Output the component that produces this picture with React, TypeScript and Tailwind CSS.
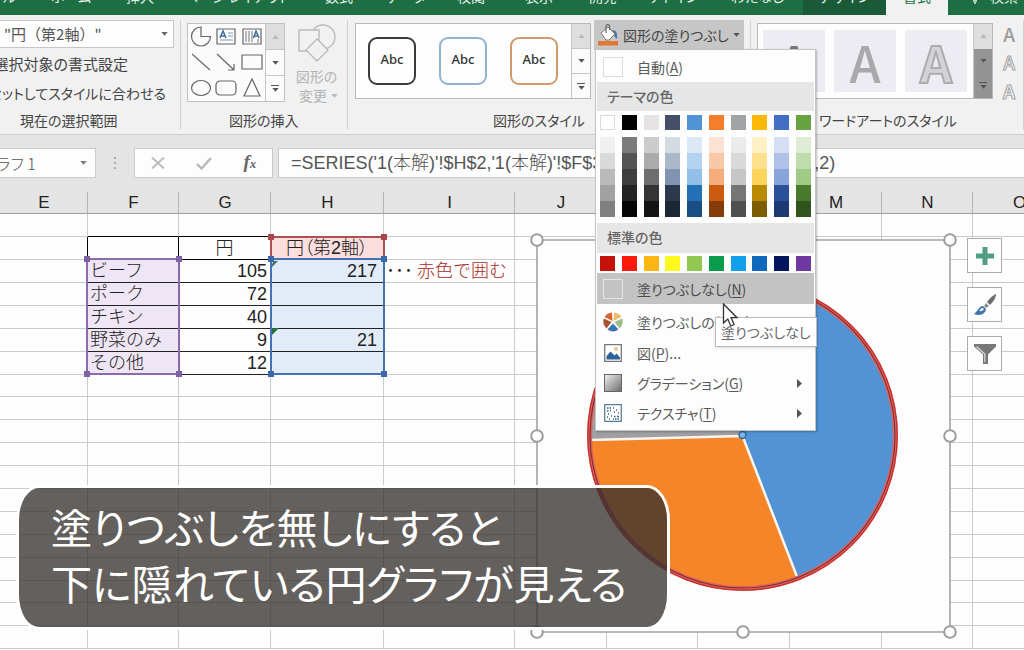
import { useState } from "react";
import type { ReactNode } from "react";
import clsx from "clsx";

const uiFont = "font-['Noto_Sans_CJK_JP','Noto_Sans',sans-serif]";
const proportional = "[font-feature-settings:'palt']";
const sheetFont = "font-['Liberation_Sans','Noto_Sans_CJK_JP',sans-serif]";

const tabs = [
  { name: "ファイル", className: "w-9 pr-5 justify-end" },
  { name: "ホーム", className: "w-[70px]" },
  { name: "挿入", className: "w-[68px]" },
  { name: "ページ レイアウト", className: "w-[126px]" },
  { name: "数式", className: "w-[78px]" },
  { name: "データ", className: "w-14" },
  { name: "校閲", className: "w-[74px]" },
  { name: "表示", className: "w-[62px]" },
  { name: "開発", className: "w-[66px]" },
  { name: "アドイン", className: "w-[76px]" },
  { name: "わたなし", className: "w-[91px]" },
  { name: "デザイン", className: "w-[83px] bg-[#1b5a38]" },
  { name: "書式", className: "w-[62px] bg-[#f1f1f1] text-[#217346]" },
];

const themeColors = [
  ["bg-white border border-[#dcdcdc]", "bg-[#f0f0f0]", "bg-[#d9d9d9]", "bg-[#bababa]", "bg-[#a2a2a2]", "bg-[#808080]"],
  ["bg-black", "bg-[#7b7b7b]", "bg-[#555555]", "bg-[#3d3d3d]", "bg-[#242424]", "bg-[#060606]"],
  ["bg-[#e5e3e3]", "bg-[#cdcccc]", "bg-[#acabab]", "bg-[#6f6e6e]", "bg-[#353434]", "bg-[#141414]"],
  ["bg-[#44506a]", "bg-[#d4dae2]", "bg-[#aab8c9]", "bg-[#8093b1]", "bg-[#2c394d]", "bg-[#1c2736]"],
  ["bg-[#4f95d6]", "bg-[#dbe8f6]", "bg-[#b4d3f2]", "bg-[#92c0e9]", "bg-[#2470b5]", "bg-[#184e83]"],
  ["bg-[#f47e2b]", "bg-[#fde2d4]", "bg-[#f9c8a6]", "bg-[#f7ac7b]", "bg-[#cb5b10]", "bg-[#863c0a]"],
  ["bg-[#a0a4a4]", "bg-[#ebebeb]", "bg-[#d9d9d9]", "bg-[#c6c6c6]", "bg-[#757575]", "bg-[#4f4f4f]"],
  ["bg-[#fdb90a]", "bg-[#fff0c6]", "bg-[#fde18f]", "bg-[#fdd45c]", "bg-[#b98a00]", "bg-[#7d5d00]"],
  ["bg-[#426fc4]", "bg-[#d6def3]", "bg-[#b0c1e8]", "bg-[#88a4da]", "bg-[#285199]", "bg-[#1d3973]"],
  ["bg-[#68a342]", "bg-[#deecd5]", "bg-[#bfdcad]", "bg-[#a1cb84]", "bg-[#4a7a2e]", "bg-[#31541e]"],
];

const standardColors = [
  "bg-[#c4120a]", "bg-[#fb1a0a]", "bg-[#fdb714]", "bg-[#fdf91e]", "bg-[#92c852]",
  "bg-[#0a9c4c]", "bg-[#12a0ec]", "bg-[#0e68bb]", "bg-[#04155f]", "bg-[#7039a2]",
];

const columns = [
  { name: "E", width: "w-[88px]" },
  { name: "F", width: "w-[91px]" },
  { name: "G", width: "w-[92px]" },
  { name: "H", width: "w-[113px]" },
  { name: "I", width: "w-[131px]" },
  { name: "J", width: "w-[92px]" },
  { name: "K", width: "w-[91px]" },
  { name: "L", width: "w-[92px]" },
  { name: "M", width: "w-[92px]" },
  { name: "N", width: "w-[91px]" },
  { name: "O", width: "" },
];

const data: Record<number, ReactNode[]> = {
  1: ["", "円", "円（第2軸）", ""],
  2: ["ビーフ", "105", "217", <><span className="pr-1 text-[#222]">･･･</span>赤色で囲む</>],
  3: ["ポーク", "72", "", ""],
  4: ["チキン", "40", "", ""],
  5: ["野菜のみ", "9", "21", ""],
  6: ["その他", "12", "", ""],
};

function Caret({ className = "fill-[#666]" }: { className?: string }) {
  return (
    <svg viewBox="0 0 8 5" className={clsx("h-1 w-[7px] shrink-0", className)}>
      <path d="M0 0h8L4 4.6z" />
    </svg>
  );
}

function ScrollColumn({ dark = false }: { dark?: boolean }) {
  const lower = dark ? "bg-[#949494]" : "border-t border-[#c6c6c6] bg-[#fbfbfb]";
  return (
    <div className="flex w-[19px] shrink-0 flex-col border-l border-[#c6c6c6]">
      <button aria-label="上へ" className="flex flex-1 items-center justify-center bg-[#dedede]">
        <svg viewBox="0 0 8 5" className="h-1 w-[7px] fill-[#b8b8b8]"><path d="M0 5h8L4 0z" /></svg>
      </button>
      <button aria-label="下へ" className={clsx("flex flex-1 items-center justify-center", lower)}>
        <Caret className="fill-[#555]" />
      </button>
      <button aria-label="その他" className={clsx("flex flex-1 flex-col items-center justify-center gap-0.5", lower)}>
        <span className="h-px w-2 bg-[#555]" />
        <Caret className="fill-[#555]" />
      </button>
    </div>
  );
}

function Group({ label, className, children, labelClass }: { label: string; className?: string; labelClass?: string; children: ReactNode }) {
  return (
    <section className={clsx("flex h-[110px] shrink-0 flex-col border-r border-[#d2d2d2]", className)}>
      <div className="flex h-[93px]">{children}</div>
      <h2 className={clsx("whitespace-nowrap text-[14px] leading-[20px] text-[#444]", proportional, labelClass)}>{label}</h2>
    </section>
  );
}

const shapes: { name: string; art: ReactNode }[] = [
  { name: "円", art: <path d="M11 1a9.500 9.500 0 1 0 9.500 9.500H11z" /> },
  { name: "テキスト", art: <><path d="M2 3h18v15H2z" /><path d="M13 7h5M13 10h5M5 14h13" strokeWidth="1" stroke="#7b9bb8" /><path d="M5 12l3-7 3 7M6 10h4" stroke="#3c6ea0" strokeWidth="1.5" /></> },
  { name: "縦書き", art: <><path d="M2 3h18v15H2z" /><path d="M5 5v11M8 5v11M11 5v11M17 13v4" strokeWidth="1" stroke="#777" /><path d="M12.500 12l2.500-7 3 7M13.500 10h4" stroke="#3c6ea0" strokeWidth="1.500" /></> },
  { name: "直線", art: <path d="M2 3l18 16" /> },
  { name: "矢印", art: <path d="M2 3l17 16M19 13v6h-6" /> },
  { name: "四角形", art: <path d="M1 4h20v14H1z" /> },
  { name: "楕円", art: <ellipse cx="11" cy="11" rx="9.500" ry="7.500" /> },
  { name: "角丸四角形", art: <rect x="1" y="4" width="20" height="14" rx="4" /> },
  { name: "三角形", art: <path d="M11 2l8 17H3z" /> },
];

function Separated({ text, accelerator, tail = "" }: { text: string; accelerator: string; tail?: string }) {
  return <span>{text}(<u className="underline-offset-2">{accelerator}</u>){tail}</span>;
}

function MenuItem({ icon, children, active, arrow, className = "h-[30px]" }: { icon: ReactNode; children: ReactNode; active?: boolean; arrow?: boolean; className?: string }) {
  return (
    <button role="menuitem" className={clsx("flex w-full items-center gap-[14px] pl-1.5 pr-3 text-left text-[14px] leading-5", className, active ? "bg-[#c3c3c3] text-[#4a4a4a]" : "text-[#5a5a5a]")}>
      <span className="flex size-5 shrink-0 items-center justify-center">{icon}</span>
      <span className="flex-1 whitespace-nowrap">{children}</span>
      {arrow && <svg viewBox="0 0 5 9" className="h-[9px] w-[5px] fill-[#555]"><path d="M0 0l5 4.500L0 9z" /></svg>}
    </button>
  );
}

function FillMenu() {
  return (
    <div role="menu" className={clsx("absolute left-px top-full z-30 w-[221px] border border-[#c4c4c4] bg-[#fdfdfd] p-px pb-0.5 shadow-[1px_1px_2px_rgba(0,0,0,.25)]", proportional)}>
      <MenuItem className="h-[31px]" icon={<span className="size-5 border border-[#dcdcdc] bg-white" />}><Separated text="自動" accelerator="A" /></MenuItem>
      <h3 className="h-[29px] bg-[#e6e6e6] pl-2.5 text-[14px] font-medium leading-7 text-[#666]">テーマの色</h3>
      <div className="flex justify-between px-[3px] pb-1.5 pt-1">
        {themeColors.map(([base, ...shades], i) => (
          <div key={i} className="flex w-[15px] flex-col">
            <button aria-label={`テーマの色 ${i + 1}`} className={clsx("mb-[7px] h-[15px]", base)} />
            {shades.map((shade, j) => (
              <button key={j} aria-label={`テーマの色 ${i + 1}-${j + 1}`} className={clsx("h-4", shade)} />
            ))}
          </div>
        ))}
      </div>
      <h3 className="h-[30px] bg-[#e6e6e6] pl-2.5 text-[14px] font-medium leading-7 text-[#666]">標準の色</h3>
      <div className="flex justify-between px-[3px] pb-0.5 pt-[3px]">
        {standardColors.map((color, i) => (
          <button key={color} aria-label={`標準の色 ${i + 1}`} className={clsx("size-[15px]", color)} />
        ))}
      </div>
      <MenuItem active className="h-[31px]" icon={<span className="size-5 border border-[#e4e4e4]" />}><Separated text="塗りつぶしなし" accelerator="N" /></MenuItem>
      <MenuItem className="mt-0.5 h-[31px]" icon={
        <svg viewBox="0 0 20 20" className="size-5">
          <path d="M9.500 9L9 0.500A9.500 9.500 0 0 0 1.500 5z" fill="#d9663a" />
          <path d="M10.500 9L11 .5A9.500 9.500 0 0 1 18.500 5z" fill="#e9bf6e" />
          <path d="M8.500 10L.8 6.500A9.500 9.500 0 0 0 3.500 16.500z" fill="#a5552f" />
          <path d="M11.500 10l7.700-3.500a9.500 9.500 0 0 1-2.700 10z" fill="#9dbd84" />
          <path d="M10 11.500l-5.500 6a9.500 9.500 0 0 0 11 0z" fill="#3b72b4" />
        </svg>
      }><Separated text="塗りつぶしの他の色" accelerator="M" tail="..." /></MenuItem>
      <MenuItem className="h-[31px]" icon={
        <svg viewBox="0 0 18 18" className="size-[18px]">
          <path d="M.7.7h16.600v16.600H.7z" fill="#fff" stroke="#777" strokeWidth="1.300" />
          <path d="M2.500 15.500V12l4-4.500 4 4 2-2 3.500 4v2z" fill="#2f6297" />
          <circle cx="12" cy="5" r="2" fill="#eac48b" />
        </svg>
      }><Separated text="図" accelerator="P" tail="..." /></MenuItem>
      <MenuItem arrow icon={<span className="size-[18px] border border-[#666] bg-linear-to-br from-[#eee] to-[#707070]" />}><Separated text="グラデーション" accelerator="G" /></MenuItem>
      <MenuItem arrow icon={
        <svg viewBox="0 0 18 18" className="size-[18px]">
          <path d="M.7.7h16.600v16.600H.7z" fill="#fff" stroke="#5d7f96" strokeWidth="1.300" />
          <path d="M3 4h1.500M5.500 4h1.500M9 4h1M3 7h1.500M6 6.500h1M12 6h1M10 8h1M4 10h1M14 9h1M3 13h1M7 12h1M10 12.500h1.500M13 12.500h2M5 15h1M9 15h1M11 15h1.500M13.500 15H15" stroke="#34627f" strokeWidth="1.500" />
        </svg>
      }><Separated text="テクスチャ" accelerator="T" /></MenuItem>
      <div role="tooltip" className="absolute left-[119px] top-[267px] whitespace-nowrap border border-[#bdbdbd] bg-white px-[5px] py-px text-[14px] leading-[26px] text-[#666] shadow-sm">塗りつぶしなし</div>
      <svg viewBox="0 0 17 24" className="absolute left-[126px] top-[253px] h-6 w-[17px]">
        <path d="M1.500 1v19l4.300-4 3 7 3.300-1.500-3-6.800H15z" fill="#fff" stroke="#333" strokeWidth="1.300" />
      </svg>
    </div>
  );
}

function Ribbon() {
  return (
    <div className="flex h-[120px] border-b border-[#cdcdcd] bg-[#f1f1f1] pt-[5px]">
      <Group label="現在の選択範囲" className="w-[181px]" labelClass="pl-5">
        <div className="flex w-[174px] flex-col overflow-hidden text-[#444]">
          <button className="flex h-7 items-center justify-between border border-l-0 border-[#c6c6c6] bg-[#fdfdfd] pl-1 pr-[5px] text-[15px] text-[#555]">
            <span className="whitespace-pre">"円（第2軸）"</span>
            <Caret />
          </button>
          <button className={clsx("mt-1.5 flex h-5 items-center justify-end whitespace-nowrap pr-[46px] text-[15px]", proportional)}>選択対象の書式設定</button>
          <button className={clsx("mt-[9px] flex h-5 items-center justify-end whitespace-nowrap pr-2 text-[14px]", proportional)}>リセットしてスタイルに合わせる</button>
        </div>
      </Group>
      <Group label="図形の挿入" className="w-[167px]" labelClass="pl-12">
        <div className="ml-1.5 mt-[3px] flex h-[79px] w-[98px] border border-[#c0c0c0] bg-[#fbfbfb]">
          <div className="grid flex-1 grid-cols-3 place-items-center">
            {shapes.map((shape) => (
              <button key={shape.name} aria-label={shape.name}>
                <svg viewBox="0 0 22 22" className="size-[22px] fill-none stroke-[#666] stroke-[1.2]">{shape.art}</svg>
              </button>
            ))}
          </div>
          <ScrollColumn />
        </div>
        <button className={clsx("ml-2.5 mt-1 flex h-[86px] flex-col items-center text-[14px] leading-[19px] text-[#b3b3b3]", proportional)}>
          <svg viewBox="0 0 42 40" className="mb-[3px] h-10 w-[42px] fill-[#f1f1f1] stroke-[#b9b9b9] stroke-[1.3]">
            <circle cx="27" cy="13" r="12" /><path d="M3 6h20v21H3z" /><path d="M21 15l11 11-11 11-11-11z" />
          </svg>
          <span>図形の</span>
          <span className="flex items-center gap-1 pl-1">変更<Caret className="fill-[#b9b9b9]" /></span>
        </button>
      </Group>
      <Group label="図形のスタイル" className="w-[403px]" labelClass="pl-[145px]">
        <div className="ml-[7px] mt-[3px] flex h-[76px] w-[236px] border border-[#b8b8b8] bg-[#fdfdfd]">
          <div className="flex flex-1 items-center gap-[23px] pl-3 font-['Noto_Sans',sans-serif] text-[13px] font-medium leading-5 text-[#333]">
            <button className="size-12 rounded-[9px] border-2 border-[#3b3b3b] pb-1">Abc</button>
            <button className="size-12 rounded-[9px] border-2 border-[#8fb3d0] pb-1">Abc</button>
            <button className="size-12 rounded-[9px] border-2 border-[#cf9a6c] pb-1">Abc</button>
          </div>
          <ScrollColumn />
        </div>
        <div className="relative ml-[3px] h-[29px]">
          <button aria-haspopup="menu" aria-expanded="true" className={clsx("flex h-[30px] w-[150px] items-center gap-1 bg-[#c6c6c6] px-1 text-[14px] text-[#444]", proportional)}>
            <svg viewBox="0 0 21 22" className="h-[22px] w-[21px] shrink-0">
              <path d="M0 17h20v4.500H0z" fill="#e27633" />
              <path d="M14 6c5 0 5.500 4 5 9-2-1-3-3-3-6z" fill="#4679a8" />
              <path d="M3 9l7-6 7 7-6 6H8z" fill="#fff" stroke="#777" />
              <path d="M8 9V2.500a1.800 1.800 0 0 1 3.600 0V6" fill="none" stroke="#666" strokeWidth="1.200" />
            </svg>
            <span className="whitespace-nowrap">図形の塗りつぶし</span>
            <Caret className="fill-[#555]" />
          </button>
          <FillMenu />
        </div>
      </Group>
      <Group label="ワードアートのスタイル" className="flex-1" labelClass="pl-[68px]">
        <div className="ml-1.5 mt-[3px] flex h-[76px] w-[236px] shrink-0 border border-[#b8b8b8] bg-[#fdfdfd]">
          <div className="flex flex-1 items-center gap-[9px] pl-[5px] text-[50px] font-medium leading-[62px] text-[#a9a9ad]">
            <button className="size-[62px] bg-[#edecf2] text-[#777]">A</button>
            <button className="size-[62px] bg-[#edecf2]">A</button>
            <button className="size-[62px] bg-[#edecf2] font-bold text-[#d3d3d6] [-webkit-text-stroke:2px_#adadb1]">A</button>
          </div>
          <ScrollColumn dark />
        </div>
        <div className="ml-2.5 flex flex-col text-[19px] font-medium leading-[26px] text-[#9b9b9b]">
          <button aria-label="文字の塗りつぶし" className="h-[27px]">A</button>
          <button aria-label="文字の輪郭" className="h-[29px] text-[#f1f1f1] [-webkit-text-stroke:1px_#a5a5a5]">A</button>
          <button aria-label="文字の効果" className="h-[29px] text-[#f1f1f1] font-bold [-webkit-text-stroke:1px_#a5a5a5]">A</button>
        </div>
      </Group>
    </div>
  );
}

function FormulaBar() {
  const [name, setName] = useState("グラフ 1");
  const [formula, setFormula] = useState("=SERIES('1(本解)'!$H$2,'1(本解)'!$F$3:$F$7,'1(本解)'!$H$3:$H$7,2)");
  return (
    <div className="flex h-[57px] bg-[#e4e4e4] pb-[14px] pt-[13px] text-[#555]">
      <div className="flex w-24 items-center overflow-hidden border border-l-0 border-[#cbcbcb] bg-[#fdfdfd] pr-2">
        <input aria-label="名前ボックス" value={name} onChange={(e) => setName(e.target.value)} className="-ml-[18px] w-24 min-w-0 bg-transparent text-[16px] font-light outline-none [font-feature-settings:'palt']" />
        <Caret className="ml-auto fill-[#777]" />
      </div>
      <div className="flex w-[38px] flex-col items-center justify-center gap-[3px]">
        <span className="size-0.5 bg-[#aaa]" /><span className="size-0.5 bg-[#aaa]" /><span className="size-0.5 bg-[#aaa]" />
      </div>
      <div className="flex w-[139px] items-center justify-around border border-[#cbcbcb] bg-[#fdfdfd]">
        <button aria-label="キャンセル"><svg viewBox="0 0 14 12" className="h-3 w-3.5 fill-none stroke-[#bcbcbc] stroke-2"><path d="M1 .5l12 11M13 .5l-12 11" /></svg></button>
        <button aria-label="入力"><svg viewBox="0 0 16 13" className="h-[13px] w-4 fill-none stroke-[#b8b8b8] stroke-[2.4]"><path d="M1 7l4.500 4.500L15 1" /></svg></button>
        <button aria-label="関数の挿入" className="font-['Liberation_Serif',serif] text-[19px] font-bold italic leading-6 text-[#666]">f<span className="text-[13px]">x</span></button>
      </div>
      <input aria-label="数式バー" value={formula} onChange={(e) => setFormula(e.target.value)} className={clsx("ml-[5px] min-w-0 flex-1 border border-r-0 border-[#cbcbcb] bg-[#fdfdfd] pl-3 text-[18px] font-light text-[#555] outline-none", sheetFont)} />
    </div>
  );
}

function cellClass(row: number, col: number) {
  const inData = row >= 1 && row <= 6;
  if (inData && col === 1) return row === 1 ? "border-black" : "border-[#222] bg-[#efe6f5] text-left";
  if (inData && col === 2) return row === 1 ? "border-black text-center" : "border-[#222] text-right pr-[3px]";
  if (inData && col === 3) return row === 1 ? "border-[#222] bg-[#fbdedd] text-center [font-feature-settings:'palt']" : "border-[#222] bg-[#e2ebf8] text-right pr-1.5";
  if (row === 0 && (col === 1 || col === 2)) return "border-r-[#cacaca] border-b-black";
  if (row === 1 && col === 0) return "border-r-black border-b-[#cacaca]";
  if (col === 4) return "border-[#cacaca] text-[#a52a26]";
  return "border-[#cacaca]";
}

function Selection({ className, dot }: { className: string; dot: string }) {
  return (
    <div className={clsx("absolute border-2", className)}>
      <span className={clsx("absolute -left-1 -top-1 size-1.5", dot)} />
      <span className={clsx("absolute -right-1 -top-1 size-1.5", dot)} />
      <span className={clsx("absolute -bottom-1 -left-1 size-1.5", dot)} />
      <span className={clsx("absolute -bottom-1 -right-1 size-1.5", dot)} />
    </div>
  );
}

function Chart() {
  const handles = [[7, 7], [420, 7], [7, 203], [420, 203], [7, 399], [213, 399], [420, 399]];
  return (
    <svg role="img" aria-label="円グラフ" viewBox="0 0 428 407" className="absolute left-[530px] top-[41px] h-[407px] w-[428px]">
      <path d="M7 7h413v392H7z" fill="#fdfdfd" stroke="#a3a3a3" strokeWidth="1.600" />
      <circle cx="212.500" cy="202" r="153" fill="#a0a0a4" />
      <path d="M212.500 203V49a153 153 0 0 1 55 296z" fill="#5293d6" />
      <path d="M212.500 203l55 142a153 153 0 0 1-207.500-138z" fill="#f58529" />
      <path d="M60 207l152.500-4 55 142" fill="none" stroke="#fdf6ef" strokeWidth="2.500" />
      <circle cx="212.500" cy="202.500" r="153" fill="none" stroke="#e2615c" strokeWidth="5" />
      <circle cx="212.500" cy="202.500" r="154.700" fill="none" stroke="#c8302b" strokeWidth="1.300" />
      <circle cx="212.500" cy="202.500" r="152.500" fill="none" stroke="#713038" strokeWidth="1.100" />
      <circle cx="212.500" cy="202" r="3.500" fill="#7db5e8" stroke="#2c6498" strokeWidth="1.400" />
      {handles.map(([x, y]) => (
        <circle key={`${x}-${y}`} cx={x} cy={y} r="5.800" fill="#fff" stroke="#9c9c9c" strokeWidth="2" />
      ))}
    </svg>
  );
}

function Sheet() {
  const toolClass = "flex size-[35px] items-center justify-center border border-[#ababab] bg-[#fdfdfd]";
  return (
    <main className="relative">
      <table className={clsx("w-full table-fixed border-separate border-spacing-0 text-[18px] font-light text-[#222]", sheetFont)}>
        <thead>
          <tr className="h-[22px] bg-[#e4e4e4]">
            {columns.map((c) => (
              <th key={c.name} scope="col" className={clsx("overflow-hidden border-b border-b-[#a0a0a0] border-r-[#b5b5b5] p-0 text-center text-[17px] font-normal leading-[21px]", c.width, c.name === "O" ? "pl-10" : "border-r pl-px")}>{c.name}</th>
            ))}
          </tr>
        </thead>
        <tbody>
          {Array.from({ length: 19 }, (_, row) => (
            <tr key={row}>
              {columns.map((c, col) => (
                <td key={c.name} className={clsx("overflow-visible whitespace-nowrap border-b px-0.5 py-0 leading-[21px]", col < 10 && "border-r", row % 9 === 7 ? "h-[22px]" : "h-[23px]", cellClass(row, col))}>
                  {col >= 1 && col <= 4 ? data[row]?.[col - 1] : ""}
                </td>
              ))}
            </tr>
          ))}
        </tbody>
      </table>
      <Selection className="left-[270px] top-11 h-6 w-[115px] border-[#b04f52]" dot="bg-[#a8484c]" />
      <Selection className="left-[86px] top-[66px] h-[117px] w-[94px] border-[#8a6bab]" dot="bg-[#7f60a3]" />
      <Selection className="left-[270px] top-[66px] h-[117px] w-[115px] border-[#4472b4]" dot="bg-[#3c68aa]" />
      <svg viewBox="0 0 6 6" className="absolute left-[272px] top-[136px] size-[7px] fill-[#1f7040]"><path d="M0 0h6L0 6z" /></svg>
      <svg viewBox="0 0 6 6" className="absolute left-[272px] top-[69px] size-[6px] fill-[#47706b]"><path d="M2 0h4L0 6V3z" /></svg>
      <Chart />
      <div className="absolute left-[967px] top-[46px] flex flex-col gap-[14px]">
        <button aria-label="グラフ要素" className={toolClass}>
          <svg viewBox="0 0 18 18" className="size-[18px] fill-[#4f9e84]"><path d="M6.500 0h5v6.500H18v5h-6.500V18h-5v-6.500H0v-5h6.500z" /></svg>
        </button>
        <button aria-label="グラフスタイル" className={toolClass}>
          <svg viewBox="0 0 24 24" className="size-6">
            <path d="M23 1c-3 1-7 5-9 8l3 3c3-3 6-7 6-11z" fill="#6d6d6d" />
            <path d="M13 10l3 3-3 2-2-2z" fill="#8b8b8b" />
            <path d="M10 13c-4 0-4 4-9 8 5 2 11 1 12-5z" fill="#3d73a8" />
            <path d="M9.500 15c-2 0-2.500 2-3 3 2 .5 4-.5 4.500-2z" fill="#fff" />
          </svg>
        </button>
        <button aria-label="グラフフィルター" className={toolClass}>
          <svg viewBox="0 0 24 22" className="h-[22px] w-6"><path d="M1 1h22v2.500l-8 8V21h-5v-9.500l-9-8z" fill="#777" /><path d="M3.500 3.500l8.300 7.500v8" fill="none" stroke="#ddd" strokeWidth="1.200" /></svg>
        </button>
      </div>
    </main>
  );
}

export default function App() {
  return (
    <div className={clsx("relative h-screen overflow-hidden bg-[#fdfdfd]", uiFont)}>
      <nav className={clsx("-mt-4 flex h-[31px] bg-[#1e6e43] text-[14px] text-[#e6f0ea]", proportional)}>
        {tabs.map((tab) => (
          <button key={tab.name} className={clsx("flex shrink-0 items-center justify-center whitespace-nowrap pb-[7px]", tab.className)}>{tab.name}</button>
        ))}
        <button className="flex flex-1 items-center gap-2.5 overflow-hidden whitespace-nowrap pb-[7px] pl-[22px]">
          <svg viewBox="0 0 10 16" className="h-4 w-2.5 shrink-0 fill-none stroke-[#e6f0ea] stroke-[1.4]"><path d="M3 11C3 8 1 7 1 4.500a4 4 0 0 1 8 0C9 7 7 8 7 11zM3 13h4M4 15h2" /></svg>
          検索
        </button>
      </nav>
      <Ribbon />
      <FormulaBar />
      <Sheet />
      <p className={clsx("absolute left-[19px] top-[488px] z-40 w-[648px] whitespace-nowrap rounded-[20px/32px] bg-[rgba(52,48,44,.77)] pb-[17px] pl-8 pt-2.5 text-[41px] leading-[56px] text-white shadow-[0_0_0_3px_#fff]", proportional)}>
        塗りつぶしを無しにすると
        <br />
        下に隠れている円グラフが見える
      </p>
    </div>
  );
}
